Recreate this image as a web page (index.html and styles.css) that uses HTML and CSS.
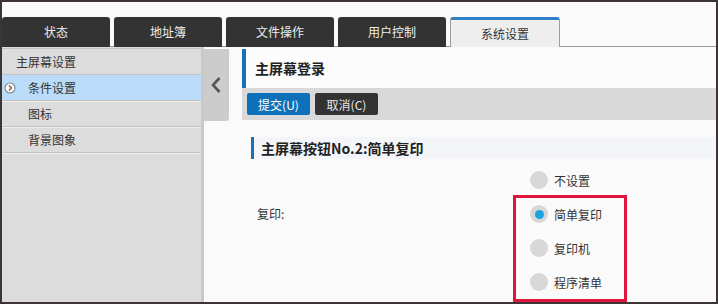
FILE: index.html
```html
<!DOCTYPE html>
<html lang="zh-CN">
<head>
  <meta charset="UTF-8" />
  <title>系统设置 - 主屏幕登录</title>
  <link rel="stylesheet" href="styles.css">
</head>
<body>
  <div class="frame">

    <!-- Top tabs -->
    <ul class="tabs">
      <li class="tab">状态</li>
      <li class="tab">地址簿</li>
      <li class="tab">文件操作</li>
      <li class="tab">用户控制</li>
      <li class="tab active">系统设置</li>
    </ul>

    <div class="page">
      <!-- Side menu -->
      <ul class="side-menu">
        <li class="side-title">主屏幕设置</li>
        <li class="side-item current">
          <svg class="cur-icon" width="12" height="12" viewBox="0 0 12 12">
            <circle cx="6" cy="6" r="5" fill="#fff" stroke="#888" stroke-width="1.2"/>
            <path d="M5 3.6 L7.4 6 L5 8.4" fill="none" stroke="#666" stroke-width="1.4"/>
          </svg>
          条件设置
        </li>
        <li class="side-item">图标</li>
        <li class="side-item">背景图象</li>
      </ul>

      <div class="collapse">
        <svg width="12" height="18" viewBox="0 0 12 18">
          <path d="M9.5 2 L3 9 L9.5 16" fill="none" stroke="#555" stroke-width="2.6"/>
        </svg>
      </div>

      <!-- Main content -->
      <div class="main">
        <h1 class="page-title">主屏幕登录</h1>
        <div class="btn-bar">
          <button class="btn btn-primary">提交(U)</button>
          <button class="btn btn-dark">取消(C)</button>
        </div>

        <div class="section">
          <h2 class="section-title">主屏幕按钮No.2:简单复印</h2>
          <div class="form-row">
            <div class="form-label">复印:</div>
            <div class="radio"><span class="dot"></span>不设置</div>
            <div class="radio checked"><span class="dot"></span>简单复印</div>
            <div class="radio"><span class="dot"></span>复印机</div>
            <div class="radio"><span class="dot"></span>程序清单</div>
          </div>
        </div>
      </div>
    </div>

    <!-- highlight annotation -->
    <div class="highlight"></div>
  </div>
</body>
</html>
```

FILE: styles.css
```css
/* Global */
body {
  margin: 0;
  font-family: "Noto Sans CJK SC", "Liberation Sans", sans-serif;
  font-size: 12px;
  color: #333;
  background: #fff;
}
ul {
  margin: 0;
  padding: 0;
  list-style: none;
}
.frame {
  position: relative;
  width: 718px;
  height: 304px;
  box-sizing: border-box;
  border: 2px solid #3d3535;
  background: #fafafa;
  overflow: hidden;
}

/* Tabs */
.tabs {
  display: flex;
  gap: 4px;
  padding-top: 15px;
  border-bottom: 1px solid #9c9c9c;
}
.tab {
  width: 108px;
  height: 30px;
  line-height: 30px;
  text-align: center;
  background: #333;
  color: #eee;
  border-radius: 3px 3px 0 0;
  margin-bottom: -1px;
}
.tab.active {
  width: 108px;
  height: 27px;
  line-height: 27px;
  margin-left: 0;
  background: #eeeeee;
  color: #333;
  border: 1px solid #9c9c9c;
  border-top: 3px solid #2f7fc6;
  border-bottom: none;
}

/* Page body */
.page {
  display: flex;
  align-items: flex-start;
  height: 254px;
}

/* Side menu */
.side-menu {
  width: 199px;
  height: 100%;
  padding-top: 1px;
  background: #dcdcdc;
  border-right: 3px solid #c9c9c9;
}
.side-menu li {
  position: relative;
  height: 25px;
  line-height: 25px;
  border-bottom: 1px solid #c4c4c4;
  box-shadow: 0 1px 0 #ececec;
}
.side-title {
  padding-left: 14px;
  border-top: 1px solid #c4c4c4;
}
.side-item {
  padding-left: 26px;
}
.side-item.current {
  background: #bbdcf8;
}
.cur-icon {
  position: absolute;
  left: 2px;
  top: 7px;
}

.collapse {
  width: 25px;
  height: 72px;
  margin-top: 2px;
  background: #cccccc;
  border-radius: 0 0 3px 0;
  display: flex;
  align-items: center;
  justify-content: center;
  padding-right: 2px;
  box-sizing: border-box;
}

/* Main */
.main {
  flex: 1;
  margin-left: 13px;
  padding-top: 2px;
}
.page-title {
  margin: 0;
  height: 39px;
  line-height: 39px;
  padding-left: 9px;
  border-left: 4px solid #1a70b8;
  background: #fcfcfc;
  font-size: 14px;
  font-weight: bold;
  color: #222;
}
.btn-bar {
  display: flex;
  gap: 5px;
  padding: 5px 5px;
  background: #d9d9d9;
}
.btn {
  width: 63px;
  height: 22px;
  border: none;
  border-radius: 2px;
  font-family: inherit;
  font-size: 12px;
  color: #fff;
  padding: 0;
}
.btn-primary {
  background: #0e70b8;
}
.btn-dark {
  background: #333;
  color: #e8e8e8;
}

.section {
  margin: 17px 0 0 9px;
}
.section-title {
  margin: 0;
  height: 22px;
  line-height: 22px;
  padding-left: 7px;
  border-left: 3px solid #1a70b8;
  background: #f3f5f8;
  font-size: 14px;
  font-weight: bold;
  color: #222;
}

/* Radio form */
.form-row {
  display: grid;
  grid-template-columns: 273px auto;
  margin-top: 4px;
  padding-left: 6px;
}
.form-label {
  grid-column: 1;
  grid-row: 2;
  line-height: 34px;
}
.radio {
  grid-column: 2;
  display: flex;
  align-items: center;
  gap: 6px;
  height: 34px;
}
.dot {
  width: 18px;
  height: 18px;
  border-radius: 50%;
  background: #d7d7d7;
  display: flex;
  align-items: center;
  justify-content: center;
}
.radio.checked .dot::after {
  content: "";
  width: 9px;
  height: 9px;
  border-radius: 50%;
  background: #18a4dc;
}

/* Red highlight box */
.highlight {
  position: absolute;
  left: 511px;
  top: 193px;
  width: 108px;
  height: 101px;
  border: 3px solid #e0143c;
}
```
